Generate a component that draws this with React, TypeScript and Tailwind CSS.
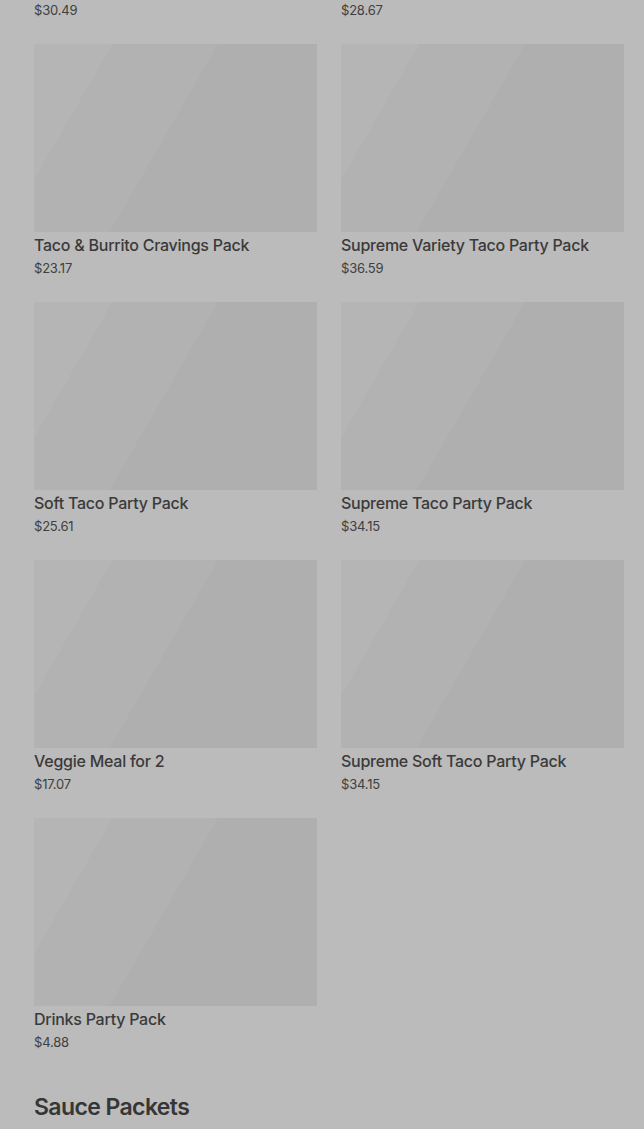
import React from "react";

const items = [
  { name: "Nachos Party Pack", price: "$30.49" },
  { name: "Classic Taco Party Pack", price: "$28.67" },
  { name: "Taco & Burrito Cravings Pack", price: "$23.17" },
  { name: "Supreme Variety Taco Party Pack", price: "$36.59" },
  { name: "Soft Taco Party Pack", price: "$25.61" },
  { name: "Supreme Taco Party Pack", price: "$34.15" },
  { name: "Veggie Meal for 2", price: "$17.07" },
  { name: "Supreme Soft Taco Party Pack", price: "$34.15" },
  { name: "Drinks Party Pack", price: "$4.88" },
];

export default function App() {
  return (
    <div
      className="min-h-[1129px] w-full overflow-hidden bg-[#bbbbbb] text-[#3a3a3a]"
      style={{ fontFamily: "Inter, 'Liberation Sans', sans-serif" }}
    >
      <div className="mt-[-214px] px-[34px] pr-[20px]">
        <div className="grid grid-cols-2 gap-x-[24px] gap-y-[24px]">
          {items.map((it, i) => (
            <div key={i} className="flex flex-col">
              <div className="h-[188px] w-full bg-[linear-gradient(120deg,#b5b5b5_0%,#b5b5b5_20%,#b2b2b2_20%,#b2b2b2_47%,#afafaf_47%,#afafaf_100%)]" />
              <div className="mt-[2px] text-[16px] leading-[22px] font-medium tracking-[-0.25px] text-[#3a3a3a]">
                {it.name}
              </div>
              <div className="mt-[2px] text-[13px] leading-[20px] tracking-[-0.2px] text-[#404040]">
                {it.price}
              </div>
            </div>
          ))}
        </div>
        <h2 className="mt-[39px] text-[23px] leading-[32px] font-semibold tracking-[-0.6px] text-[#363636]">
          Sauce Packets
        </h2>
      </div>
    </div>
  );
}
